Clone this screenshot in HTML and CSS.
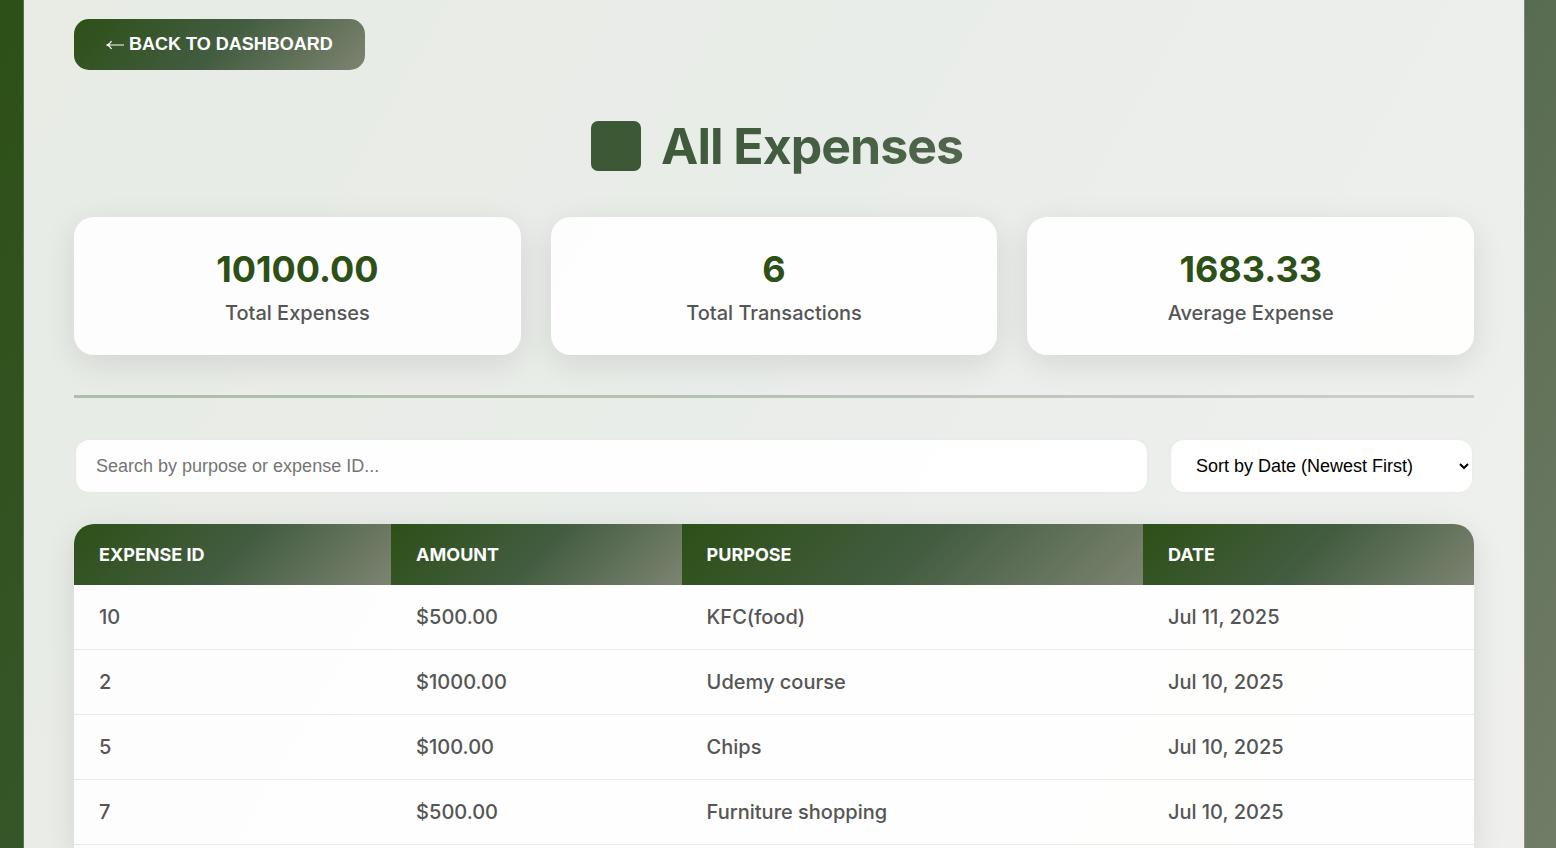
FILE: index.html
```html
<!DOCTYPE html>
<html lang="en">
<head>
    <meta charset="UTF-8">
    <meta name="viewport" content="width=device-width, initial-scale=1.0">
    <title>All Expenses</title>
    <link rel="stylesheet" href="styles.css">
</head>
<body>
<div class="container">
    <button type="button" class="back-btn">
        <svg class="back-arrow" viewBox="0 0 18 12" aria-hidden="true"><path d="M18 6H1.5M5.5 2Q4 5 1 6Q4 7 5.5 10" fill="none" stroke="currentColor" stroke-width="1.2"/></svg>
        Back to Dashboard
    </button>

    <h1 class="page-title"><span class="title-icon"></span>All Expenses</h1>

    <div class="stats">
        <div class="stat-card">
            <div class="stat-value">10100.00</div>
            <div class="stat-label">Total Expenses</div>
        </div>
        <div class="stat-card">
            <div class="stat-value">6</div>
            <div class="stat-label">Total Transactions</div>
        </div>
        <div class="stat-card">
            <div class="stat-value">1683.33</div>
            <div class="stat-label">Average Expense</div>
        </div>
    </div>

    <hr class="divider">

    <div class="controls">
        <input type="text" class="search-input" id="search" aria-label="Search expenses" placeholder="Search by purpose or expense ID...">
        <select class="sort-select" id="sort" aria-label="Sort expenses">
            <option>Sort by Date (Newest First)</option>
        </select>
    </div>

    <div class="table-wrapper">
        <table class="expense-table">
            <thead>
                <tr>
                    <th class="col-id">Expense ID</th>
                    <th class="col-amount">Amount</th>
                    <th class="col-purpose">Purpose</th>
                    <th class="col-date">Date</th>
                </tr>
            </thead>
            <tbody>
                <tr><td>10</td><td>$500.00</td><td>KFC(food)</td><td>Jul 11, 2025</td></tr>
                <tr><td>2</td><td>$1000.00</td><td>Udemy course</td><td>Jul 10, 2025</td></tr>
                <tr><td>5</td><td>$100.00</td><td>Chips</td><td>Jul 10, 2025</td></tr>
                <tr><td>7</td><td>$500.00</td><td>Furniture shopping</td><td>Jul 10, 2025</td></tr>
            </tbody>
        </table>
    </div>
</div>
</body>
</html>
```
FILE: styles.css
```css
:root {
    --gradient: linear-gradient(135deg, #2d5016 0%, #425c40 50%, #7d8471 100%);
}

* {
    box-sizing: border-box;
}

body {
    margin: 0;
    padding: 0 31px 0 23px;
    min-height: 100vh;
    font-family: Inter, sans-serif;
    color: #555;
    background: linear-gradient(120deg, #2d5016 0%, #3e5c3b 50%, #7d8471 112%) fixed;
}

.container {
    display: flex;
    flex-direction: column;
    min-height: 100vh;
    padding: 19px 50px 0;
    background: rgba(255, 255, 255, 0.89);
    background-clip: padding-box;
    border: solid rgba(255, 255, 255, 0.2);
    border-width: 0 1px;
}

.back-btn {
    display: flex;
    align-items: center;
    align-self: flex-start;
    gap: 5px;
    padding: 15px 32px;
    border: none;
    border-radius: 15px;
    background: var(--gradient);
    color: #fff;
    font-family: "Liberation Sans", Arial, sans-serif;
    font-size: 18px;
    line-height: 21px;
    font-weight: 700;
    text-transform: uppercase;
    cursor: pointer;
}

.back-arrow {
    width: 18px;
    height: 12px;
}

.page-title {
    display: flex;
    justify-content: center;
    align-items: center;
    gap: 14px;
    margin: 45px 0 40px;
    font-size: 50px;
    line-height: 62px;
    font-weight: 700;
    letter-spacing: -1px;
    background: var(--gradient);
    background-clip: text;
    -webkit-background-clip: text;
    color: transparent;
}

.title-icon {
    width: 50px;
    height: 50px;
    margin: 0 6px;
    border-radius: 7px;
    background: #3c5835;
}

.stats {
    display: grid;
    grid-template-columns: repeat(3, 1fr);
    gap: 30px;
}

.stat-card {
    padding: 30px;
    border-radius: 20px;
    background: rgba(255, 255, 255, 0.9);
    box-shadow: 0 8px 32px rgba(0, 0, 0, 0.1);
    text-align: center;
}

.stat-value {
    margin-bottom: 10px;
    font-size: 36px;
    line-height: 44px;
    font-weight: 700;
    color: #2d5016;
}

.stat-label {
    font-size: 20px;
    line-height: 24px;
    font-weight: 500;
}

.divider {
    width: 100%;
    height: 3px;
    margin: 40px 0;
    border: none;
    background: var(--gradient);
    opacity: 0.3;
}

.controls {
    display: flex;
    gap: 20px;
    margin-bottom: 30px;
}

.search-input,
.sort-select {
    height: 56px;
    border: 2px solid rgba(125, 132, 113, 0.02);
    border-radius: 15px;
    background: rgba(255, 255, 255, 0.95);
    background-clip: padding-box;
    font-family: "Liberation Sans", Arial, sans-serif;
    font-size: 18px;
}

.search-input {
    flex: 1;
    min-width: 0;
    padding: 0 20px;
}

.sort-select {
    width: 305px;
    padding: 0 0 0 21px;
    color: #000;
}

.table-wrapper {
    flex: 1;
    border-radius: 20px 20px 0 0;
    overflow: hidden;
    background: rgba(255, 255, 255, 0.9);
    box-shadow: 0 8px 32px rgba(0, 0, 0, 0.1);
}

.expense-table {
    width: 100%;
    table-layout: fixed;
    border-collapse: collapse;
}

.expense-table th {
    padding: 20px 25px;
    background: var(--gradient);
    color: #fff;
    font-size: 18px;
    line-height: 21px;
    font-weight: 700;
    text-align: left;
    text-transform: uppercase;
}

.expense-table td {
    padding: 20px 25px;
    border-bottom: 1px solid rgba(0, 0, 0, 0.08);
    font-size: 20px;
    line-height: 24px;
    font-weight: 500;
}

.col-id {
    width: 22.65%;
}

.col-amount {
    width: 20.75%;
}

.col-purpose {
    width: 32.95%;
}
```
